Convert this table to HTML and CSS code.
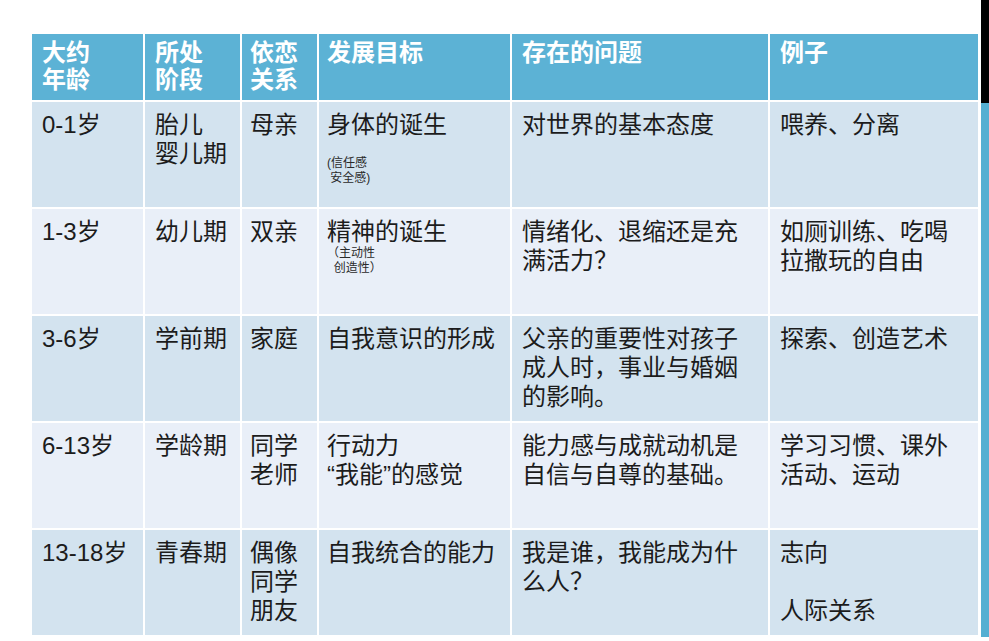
FILE: index.html
```html
<!DOCTYPE html>
<html lang="zh-CN">
<head>
<meta charset="utf-8">
<title>儿童发展阶段</title>
<link rel="stylesheet" href="styles.css">
</head>
<body>
<div class="page">
  <main class="slide">
    <table class="stages">
      <colgroup>
        <col class="c1"><col class="c2"><col class="c3"><col class="c4"><col class="c5"><col class="c6">
      </colgroup>
      <thead>
        <tr>
          <th>大约<br>年龄</th>
          <th>所处<br>阶段</th>
          <th>依恋关系</th>
          <th>发展目标</th>
          <th>存在的问题</th>
          <th>例子</th>
        </tr>
      </thead>
      <tbody>
        <tr class="odd">
          <td>0-1岁</td>
          <td>胎儿<br>婴儿期</td>
          <td>母亲</td>
          <td>身体的诞生<div class="note gap">(信任感<br>&nbsp;安全感)</div></td>
          <td>对世界的基本态度</td>
          <td>喂养、分离</td>
        </tr>
        <tr class="even">
          <td>1-3岁</td>
          <td>幼儿期</td>
          <td>双亲</td>
          <td>精神的诞生<div class="note">（主动性<br>&nbsp;&nbsp;创造性）</div></td>
          <td>情绪化、退缩还是充满活力？</td>
          <td>如厕训练、吃喝拉撒玩的自由</td>
        </tr>
        <tr class="odd">
          <td>3-6岁</td>
          <td>学前期</td>
          <td>家庭</td>
          <td>自我意识的形成</td>
          <td>父亲的重要性对孩子成人时，事业与婚姻的影响。</td>
          <td>探索、创造艺术</td>
        </tr>
        <tr class="even">
          <td>6-13岁</td>
          <td>学龄期</td>
          <td>同学老师</td>
          <td>行动力<br>“我能”的感觉</td>
          <td>能力感与成就动机是自信与自尊的基础。</td>
          <td>学习习惯、课外活动、运动</td>
        </tr>
        <tr class="odd">
          <td>13-18岁</td>
          <td>青春期</td>
          <td>偶像同学朋友</td>
          <td>自我统合的能力</td>
          <td>我是谁，我能成为什么人？</td>
          <td>志向<br><br>人际关系</td>
        </tr>
      </tbody>
    </table>
  </main>
  <aside class="edge">
    <div class="edge-top"></div>
    <div class="edge-bottom"></div>
  </aside>
</div>
</body>
</html>
```

FILE: styles.css
```css
html, body {
  margin: 0;
  padding: 0;
  background: #ffffff;
}

body {
  font-family: "Liberation Sans", "Noto Sans CJK SC", sans-serif;
  color: #1c1c1c;
}

.page {
  display: flex;
  width: 989px;
  height: 641px;
  overflow: hidden;
}

.slide {
  flex: 0 0 981px;
  padding: 32px 0 0 30px;
  box-sizing: border-box;
}

.stages {
  border-collapse: separate;
  border-spacing: 2px;
  table-layout: fixed;
  width: 950px;
}

.c1 { width: 111px; }
.c2 { width: 95px; }
.c3 { width: 75px; }
.c4 { width: 191px; }
.c5 { width: 256px; }
.c6 { width: 208px; }

.stages th,
.stages td {
  box-sizing: border-box;
  vertical-align: top;
  text-align: left;
  padding: 8px 8px 0 10px;
  font-size: 24px;
  line-height: 29px;
  overflow: hidden;
}

.stages th {
  background: #5cb2d5;
  color: #ffffff;
  font-weight: bold;
  padding-top: 5px;
  line-height: 27px;
}

.stages thead tr { height: 66px; }
.stages tbody tr { height: 105px; }

.stages th:nth-child(3),
.stages td:nth-child(3),
.stages th:nth-child(4),
.stages td:nth-child(4) {
  padding-left: 8px;
  padding-right: 4px;
}

.odd td { background: #d3e3ef; }
.even td { background: #e9eff8; }

.note {
  font-size: 12px;
  line-height: 15px;
  color: #2a2a2a;
}

.note.gap { margin-top: 17px; }

.edge {
  flex: 0 0 8px;
  display: flex;
  flex-direction: column;
  height: 637px;
}

.edge-top {
  height: 103px;
  background: #000000;
}

.edge-bottom {
  flex: 1;
  background: #55afd2;
}
```
